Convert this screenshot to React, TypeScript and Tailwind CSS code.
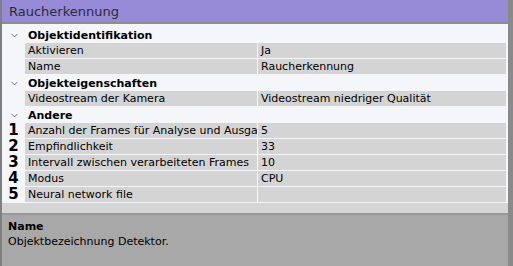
import { ChevronDown } from 'lucide-react';

type Row =
  | { kind: 'group'; label: string }
  | { kind: 'prop'; label: string; value: string; num?: string };

const rows: Row[] = [
  { kind: 'group', label: 'Objektidentifikation' },
  { kind: 'prop', label: 'Aktivieren', value: 'Ja' },
  { kind: 'prop', label: 'Name', value: 'Raucherkennung' },
  { kind: 'group', label: 'Objekteigenschaften' },
  { kind: 'prop', label: 'Videostream der Kamera', value: 'Videostream niedriger Qualität' },
  { kind: 'group', label: 'Andere' },
  { kind: 'prop', label: 'Anzahl der Frames für Analyse und Ausgabe', value: '5', num: '1' },
  { kind: 'prop', label: 'Empfindlichkeit', value: '33', num: '2' },
  { kind: 'prop', label: 'Intervall zwischen verarbeiteten Frames', value: '10', num: '3' },
  { kind: 'prop', label: 'Modus', value: 'CPU', num: '4' },
  { kind: 'prop', label: 'Neural network file', value: '', num: '5' },
];

export default function App() {
  return (
    <div
      className="w-[513px] h-[266px] flex flex-col bg-[#f4f6fa] border-l-2 border-l-[#808080] border-r-[5px] border-r-[#8a8a8a] text-[11px] text-black overflow-hidden"
      style={{ fontFamily: '"DejaVu Sans", Verdana, sans-serif' }}
    >
      {/* Title */}
      <div className="h-[24px] shrink-0 bg-[#978ad6] border-b-2 border-b-[#8c8c8c] flex items-center pl-[7px] pt-[1px] text-[13px] text-[#2b2b3b]">
        Raucherkennung
      </div>

      {/* Property grid */}
      <div className="flex flex-col pt-[3px] pr-[2px]">
        {rows.map((row, i) =>
          row.kind === 'group' ? (
            <div key={i} className="h-[16px] flex items-center">
              <div className="w-[23px] flex justify-center pl-[1px]">
                <ChevronDown className="w-[11px] h-[11px] text-[#666]" strokeWidth={2} />
              </div>
              <div className="pl-[3px] font-bold leading-none">{row.label}</div>
            </div>
          ) : (
            <div key={i} className="h-[16px] flex">
              <div className="w-[23px] h-[15px] flex items-center justify-center font-bold text-[15px] leading-none">
                {row.num}
              </div>
              <div className="w-[232px] h-[15px] bg-[#d4d4d4] flex items-center pl-[3px] overflow-hidden whitespace-nowrap leading-none">
                {row.label}
              </div>
              <div className="w-[1px] h-[15px] bg-[#f4f6fa]" />
              <div className="flex-1 h-[15px] bg-[#d4d4d4] flex items-center pl-[3px] whitespace-nowrap leading-none">
                {row.value}
              </div>
            </div>
          )
        )}
      </div>

      <div className="h-[10px] shrink-0 bg-[#d5d5d5]" />
      <div className="h-[2px] shrink-0 bg-[#9a9a9a]" />

      {/* Description */}
      <div className="flex-1 bg-[#a8a8a8] pl-[6px] pt-[4px] leading-[15px]">
        <div className="font-bold">Name</div>
        <div>Objektbezeichnung Detektor.</div>
      </div>
    </div>
  );
}
